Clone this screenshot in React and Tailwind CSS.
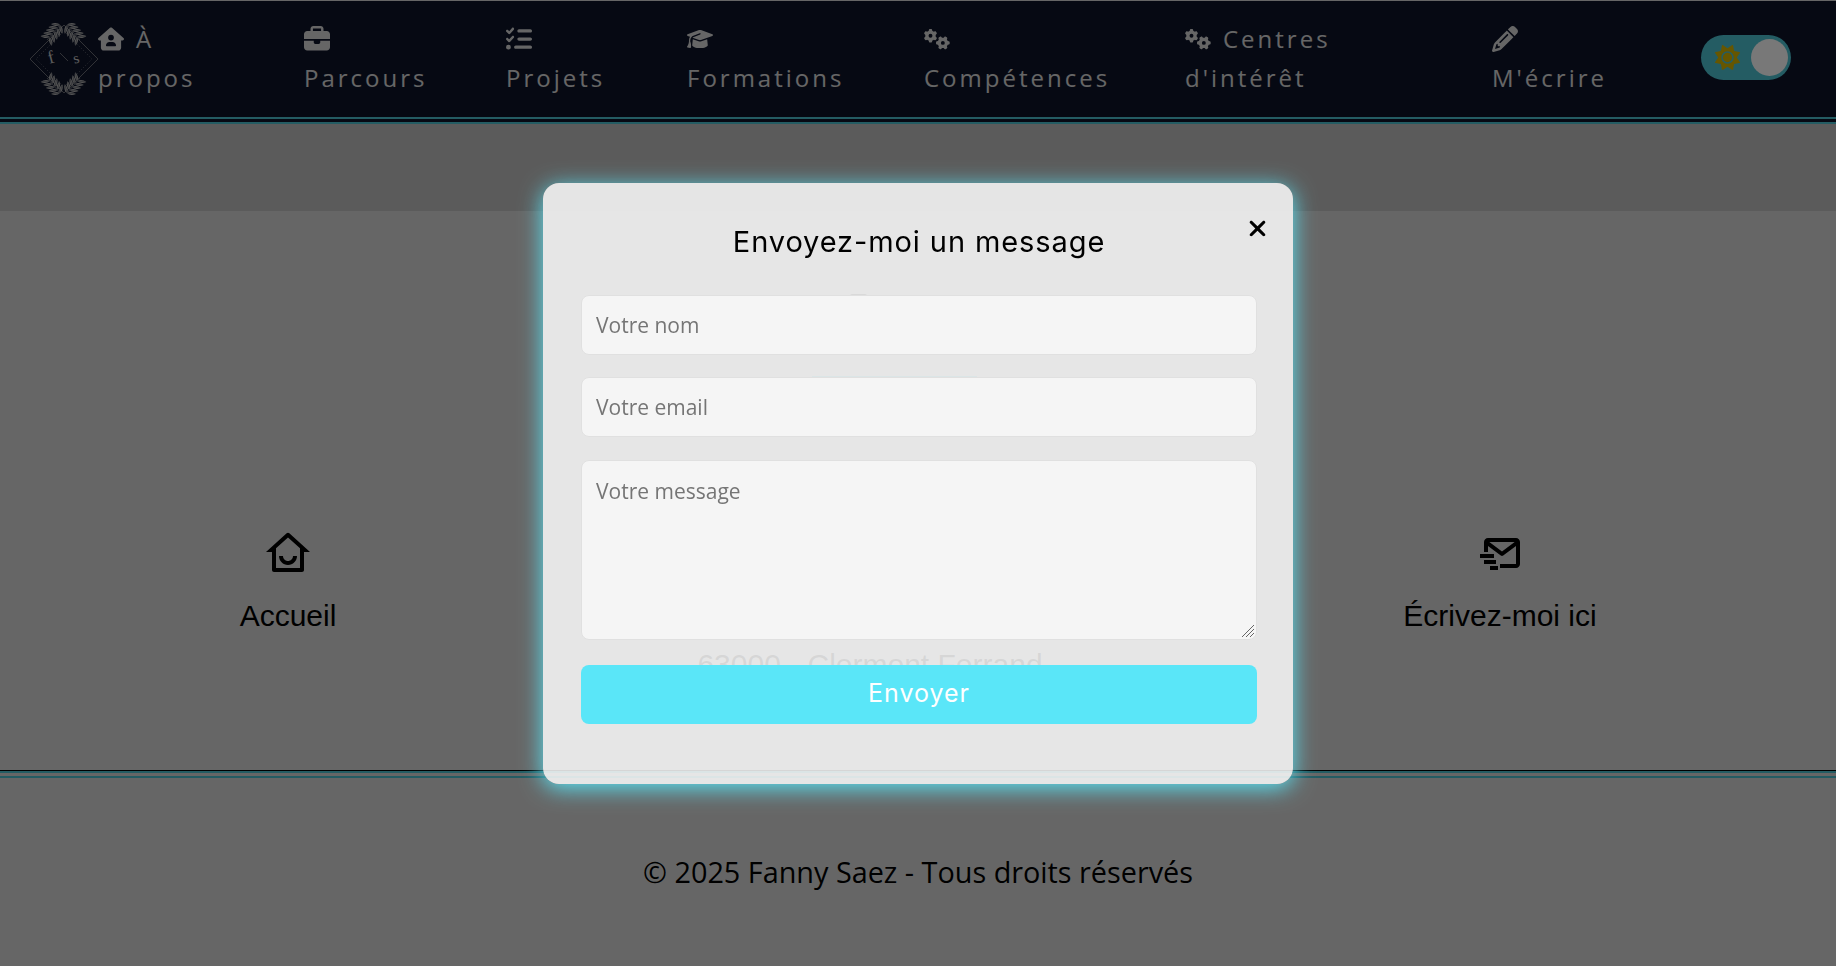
import { FaHouseUser, FaBriefcase, FaListCheck, FaGraduationCap, FaGears, FaPencil, FaSun, FaXmark } from 'react-icons/fa6';
import { RiHomeSmileLine } from 'react-icons/ri';
import { BiMailSend } from 'react-icons/bi';

const navItems = [
  { icon: FaHouseUser, first: 'À', second: 'propos', width: 'w-[206px]' },
  { icon: FaBriefcase, first: '', second: 'Parcours', width: 'w-[202px]' },
  { icon: FaListCheck, first: '', second: 'Projets', width: 'w-[181px]' },
  { icon: FaGraduationCap, first: '', second: 'Formations', width: 'w-[237px]' },
  { icon: FaGears, first: '', second: 'Compétences', width: 'w-[261px]' },
  { icon: FaGears, first: 'Centres', second: "d'intérêt", width: 'w-[307px]' },
  { icon: FaPencil, first: '', second: "M'écrire", width: 'w-[209px]' },
];

// leaves along a branch going from (x1,y1) to (x2,y2)
function Branch({ x1, y1, x2, y2 }) {
  const dir = (Math.atan2(y2 - y1, x2 - x1) * 180) / Math.PI;
  const steps = [0, 0.2, 0.4, 0.6, 0.8];
  return (
    <g>
      <path d={`M${x1} ${y1} L${x2} ${y2}`} stroke="#ddd" strokeWidth="0.5" />
      {steps.map((t) =>
        [-55, 55].map((spread) => (
          <g key={`${t}${spread}`} transform={`translate(${x1 + (x2 - x1) * t} ${y1 + (y2 - y1) * t}) rotate(${dir + spread})`}>
            <path d="M0 0 C2 -2 6 -2 9 0 C6 2 2 2 0 0Z" fill="#d4d4d4" />
            <path d="M0 0 L8 0" stroke="#0f1730" strokeWidth="0.35" />
          </g>
        ))
      )}
    </g>
  );
}

function Logo() {
  return (
    <svg viewBox="0 0 70 78" className="w-[70px] h-[78px] shrink-0 -mr-[2px]">
      <path d="M34 5 L68 39 L34 73 L0 39 Z" fill="none" stroke="#c8c8c8" strokeWidth="0.6" />
      <path d="M34 11 L62 39 L34 67 L6 39 Z" fill="none" stroke="#c8c8c8" strokeWidth="0.5" strokeDasharray="1 2" />
      <path d="M30 33 L38 41" stroke="#c8c8c8" strokeWidth="0.6" />
      <Branch x1={30} y1={5} x2={17} y2={20} />
      <Branch x1={37} y1={5} x2={50} y2={20} />
      <Branch x1={30} y1={73} x2={17} y2={58} />
      <Branch x1={37} y1={73} x2={50} y2={58} />
      <text x="18" y="43" fontSize="18" fontFamily="'Liberation Serif', serif" fill="#e5e5e5" transform="rotate(-15 22 38)">f</text>
      <text x="43" y="43" fontSize="15" fontFamily="'Liberation Serif', serif" fill="#e5e5e5" transform="rotate(-15 47 38)">s</text>
    </svg>
  );
}

function Nav() {
  return (
    <nav className="h-[123px] mt-px bg-[#0f1730] border-b-[7px] border-double border-[#5ae6f8] flex items-center pl-[30px] font-['Open_Sans',sans-serif]">
      <Logo />
      <div className="flex -mt-[2px]">
        {navItems.map((item) => {
          const Icon = item.icon;
          return (
            <a key={item.second} className={`${item.width} block text-[24px] leading-[39px] tracking-[3px] text-white`}>
              <span className="flex items-center gap-[12px] h-[39px]">
                <Icon className="text-[26px]" />
                {item.first}
              </span>
              {item.second}
            </a>
          );
        })}
      </div>
      <div className="w-[90px] h-[45px] -mt-[3px] rounded-full bg-[#5ae6f8] flex items-center justify-between pl-[14px] pr-[3px] shrink-0">
        <FaSun className="text-[25px] text-[#ffd700]" />
        <span className="relative z-20 w-[37px] h-[37px] rounded-full bg-[#787878]" />
      </div>
    </nav>
  );
}

function Contact({ icon: Icon, label, width }) {
  return (
    <div className={`${width} mt-[319px] flex flex-col items-center`}>
      <Icon className="text-[48px] text-black" />
      <p className="mt-[20px] text-[30px] leading-[36px] text-black font-['Liberation_Sans',sans-serif]">{label}</p>
    </div>
  );
}

function ContactModal() {
  const fieldClass =
    "w-full rounded-lg bg-[#f5f5f5] border border-[#e0e0e0] px-[14px] text-[21px] text-black placeholder:text-[#757575] font-['Open_Sans',sans-serif] outline-none";

  return (
    <div className="fixed inset-0 z-10 bg-black/60 flex items-center justify-center">
      <div className="relative w-[750px] h-[601px] rounded-2xl bg-white/[0.84] shadow-[0_4px_22px_#5ae6f8] pl-[38px] pr-[36px] pt-[40px]">
        <button className="absolute top-[33px] right-[23px] text-[25px] text-black">
          <FaXmark />
        </button>
        <h2 className="text-center text-[29px] leading-[38px] text-black font-['Inter',sans-serif] tracking-[0.9px]">
          Envoyez-moi un message
        </h2>
        <form className="mt-[34px] flex flex-col">
          <input className={`${fieldClass} h-[60px]`} placeholder="Votre nom" />
          <input className={`${fieldClass} h-[60px] mt-[22px]`} placeholder="Votre email" />
          <div className="relative mt-[23px]">
            <textarea className={`${fieldClass} h-[180px] pt-[15px] block resize-none`} placeholder="Votre message" />
            <svg viewBox="0 0 14 14" className="absolute right-[2px] bottom-[2px] w-[14px] h-[14px] pointer-events-none">
              <path d="M1 13 L13 1 M5 13 L13 5 M9 13 L13 9" stroke="#666" strokeWidth="1" />
            </svg>
          </div>
          <button type="button" className="mt-[25px] h-[59px] rounded-lg bg-[#5ae6f8] text-white text-[25px] tracking-[1px] font-['Inter',sans-serif]">
            Envoyer
          </button>
        </form>
      </div>
    </div>
  );
}

export default function App() {
  return (
    <div className="min-h-[966px] bg-white flex flex-col">
      <Nav />
      <div className="h-[87px] bg-[#e4e4e4]" />
      <main className="h-[560px] flex items-start">
        <Contact icon={RiHomeSmileLine} label="Accueil" width="w-[576px]" />
        <div className="w-[588px] h-full flex flex-col items-center">
          {/* mostly hidden behind the modal, only slivers show through */}
          <div className="self-start ml-[179px] mt-[83px] h-[2px] flex items-end" aria-hidden="true">
            <span className="w-[13px] h-[1px] bg-black/80" />
            <span className="w-[12px] h-[1px] ml-[12px] bg-black/80" />
            <span className="w-[17px] h-[2px] ml-[58px] rounded-t-full bg-black/80" />
          </div>
          <div className="mt-[80px] w-[165px] h-[2px] ml-[48px] bg-[#5ae6f8]" aria-hidden="true" />
          <p className="mt-[269px] text-[30px] leading-[36px] text-black font-['Liberation_Sans',sans-serif]">63000 - Clermont Ferrand</p>
        </div>
        <Contact icon={BiMailSend} label="Écrivez-moi ici" width="w-[672px]" />
      </main>
      <div className="h-[7px] border-y-2 border-[#5ae6f8] shadow-[0_-1px_0_#000]" />
      <footer className="flex-1 flex items-center justify-center text-[28.8px] text-black font-['Open_Sans',sans-serif]">
        © 2025 Fanny Saez - Tous droits réservés
      </footer>
      <ContactModal />
    </div>
  );
}
